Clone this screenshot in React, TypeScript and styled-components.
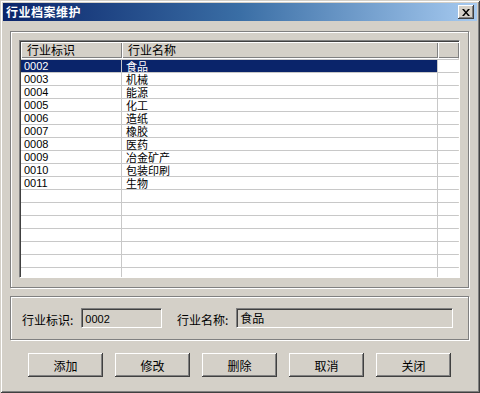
import React from "react";
import styled, { createGlobalStyle } from "styled-components";

const Global = createGlobalStyle`
  html, body { margin: 0; padding: 0; background: #D4D0C8; }
  * { box-sizing: border-box; }
`;

const CJK = `"Noto Sans CJK SC", "Liberation Sans", sans-serif`;
const NUM = `"Liberation Sans", "Noto Sans CJK SC", sans-serif`;

const Window = styled.div`
  width: 480px;
  height: 393px;
  background: #d4d0c8;
  display: flex;
  flex-direction: column;
  padding: 3px;
  box-shadow: inset 1px 1px 0 #d4d0c8, inset -1px -1px 0 #404040,
    inset 2px 2px 0 #ffffff, inset -2px -2px 0 #808080;
  font-family: ${CJK};
  font-size: 12px;
  color: #000;
`;

const TitleBar = styled.div`
  height: 18px;
  display: flex;
  align-items: center;
  justify-content: space-between;
  padding: 0 3px 0 3px;
  background: linear-gradient(to right, #0a246a 0%, #3a6ea5 50%, #a6caf0 100%);
`;

const Title = styled.span`
  color: #fff;
  font-weight: bold;
  font-size: 12px;
  line-height: 18px;
  letter-spacing: 0.5px;
`;

const CloseButton = styled.div`
  width: 16px;
  height: 14px;
  background: #d4d0c8;
  display: flex;
  align-items: center;
  justify-content: center;
  box-shadow: inset -1px -1px 0 #404040, inset 1px 1px 0 #ffffff,
    inset -2px -2px 0 #808080;
`;

const Body = styled.div`
  flex: 1;
  display: flex;
  flex-direction: column;
  padding: 10px 7px 0 7px;
`;

const Group = styled.div<{ $h: number }>`
  height: ${(p) => p.$h}px;
  border: 1px solid #808080;
  box-shadow: inset 1px 1px 0 #ffffff, 1px 1px 0 #ffffff;
  margin-right: 1px;
`;

const ListGroup = styled(Group)`
  padding: 8px 8px 9px 8px;
`;

const Grid = styled.div`
  height: 100%;
  background: #fff;
  border-top: 1px solid #808080;
  border-left: 1px solid #808080;
  border-right: 1px solid #ffffff;
  border-bottom: 1px solid #ffffff;
  box-shadow: inset 1px 1px 0 #404040, inset -1px -1px 0 #d4d0c8;
  padding: 1px;
  overflow: hidden;
  display: flex;
  flex-direction: column;
`;

const cols = "101px 316px 21px";

const HeaderRow = styled.div`
  display: grid;
  grid-template-columns: ${cols};
  height: 16px;
  background: #d4d0c8;
  margin-bottom: 1px;
  flex-shrink: 0;
`;

const HeaderCell = styled.div`
  padding-left: 6px;
  font-size: 12px;
  line-height: 16px;
  box-shadow: inset 1px 1px 0 #ffffff, inset -1px -1px 0 #808080;
  white-space: nowrap;
`;

const Row = styled.div`
  display: grid;
  grid-template-columns: ${cols};
  height: 13px;
  border-top: 1px solid #c8c8c8;
  flex-shrink: 0;
`;

const Cell = styled.div<{ $sel?: boolean; $num?: boolean; $last?: boolean }>`
  height: 12px;
  line-height: 12px;
  padding-left: ${(p) => (p.$num ? 3 : 4)}px;
  font-family: ${(p) => (p.$num ? NUM : CJK)};
  font-size: 11px;
  background: ${(p) => (p.$sel ? "#0a246a" : "#ffffff")};
  color: ${(p) => (p.$sel ? "#ffffff" : "#000000")};
  border-right: ${(p) => (p.$last ? "none" : "1px solid #c8c8c8")};
  white-space: nowrap;
`;

const FieldsGroup = styled(Group)`
  margin-top: 8px;
  display: flex;
  align-items: center;
  padding: 0 0 0 11px;
`;

const Label = styled.span`
  font-size: 12px;
  margin-right: 8px;
  padding-top: 2px;
  white-space: nowrap;
`;

const Input = styled.div<{ $w: number }>`
  width: ${(p) => p.$w}px;
  height: 20px;
  margin-right: 15px;
  background: #d4d0c8;
  border-top: 1px solid #808080;
  border-left: 1px solid #808080;
  border-right: 1px solid #ffffff;
  border-bottom: 1px solid #ffffff;
  box-shadow: inset 1px 1px 0 #404040, inset -1px -1px 0 #d4d0c8;
  padding: 2px 3px;
  line-height: 14px;
  white-space: nowrap;
`;

const InputText = styled.span<{ $num?: boolean }>`
  font-family: ${(p) => (p.$num ? NUM : CJK)};
  font-size: ${(p) => (p.$num ? 11 : 12)}px;
`;

const ButtonBar = styled.div`
  display: flex;
  gap: 12px;
  padding: 13px 0 0 18px;
`;

const Button = styled.button`
  width: 75px;
  height: 24px;
  background: #d4d0c8;
  border: none;
  padding: 0;
  font-family: ${CJK};
  font-size: 12px;
  color: #000;
  box-shadow: inset -1px -1px 0 #404040, inset 1px 1px 0 #ffffff,
    inset -2px -2px 0 #808080;
`;

const data: [string, string][] = [
  ["0002", "食品"],
  ["0003", "机械"],
  ["0004", "能源"],
  ["0005", "化工"],
  ["0006", "造纸"],
  ["0007", "橡胶"],
  ["0008", "医药"],
  ["0009", "冶金矿产"],
  ["0010", "包装印刷"],
  ["0011", "生物"],
];

const rows: [string, string][] = [
  ...data,
  ...Array.from({ length: 7 }, () => ["", ""] as [string, string]),
];

export default function App() {
  return (
    <Window>
      <Global />
      <TitleBar>
        <Title>行业档案维护</Title>
        <CloseButton>
          <svg width="8" height="7" viewBox="0 0 8 7">
            <path d="M0 0h2l2 2.5L6 0h2L5 3.5 8 7H6L4 4.5 2 7H0l3-3.5z" fill="#000" />
          </svg>
        </CloseButton>
      </TitleBar>
      <Body>
        <ListGroup $h={257}>
          <Grid>
            <HeaderRow>
              <HeaderCell>行业标识</HeaderCell>
              <HeaderCell>行业名称</HeaderCell>
              <HeaderCell />
            </HeaderRow>
            {rows.map(([id, name], i) => (
              <Row key={i}>
                <Cell $num $sel={i === 0}>{id}</Cell>
                <Cell $sel={i === 0}>{name}</Cell>
                <Cell $last />
              </Row>
            ))}
          </Grid>
        </ListGroup>
        <FieldsGroup $h={44}>
          <Label>行业标识:</Label>
          <Input $w={82}>
            <InputText $num>0002</InputText>
          </Input>
          <Label>行业名称:</Label>
          <Input $w={221}>
            <InputText>食品</InputText>
          </Input>
        </FieldsGroup>
        <ButtonBar>
          <Button>添加</Button>
          <Button>修改</Button>
          <Button>删除</Button>
          <Button>取消</Button>
          <Button>关闭</Button>
        </ButtonBar>
      </Body>
    </Window>
  );
}
